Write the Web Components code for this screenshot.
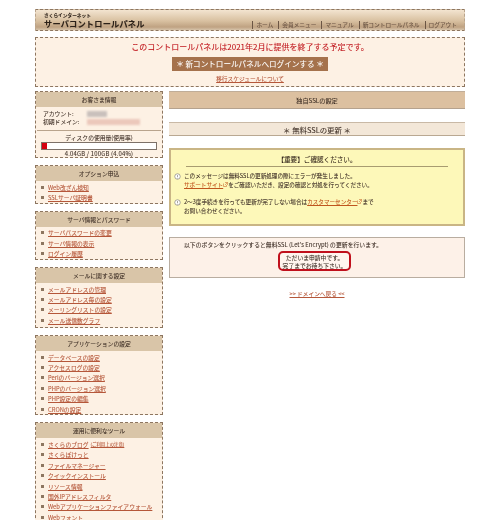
<!DOCTYPE html>
<html lang="ja">
<head>
<meta charset="utf-8">
<title>サーバコントロールパネル</title>
<style>
  html, body { height: 100%; }
  body {
    margin: 0;
    background: #fff;
    overflow: hidden;
    color: #3f3027;
    font-family: "Noto Sans CJK JP", "Liberation Sans", sans-serif;
  }
</style>
</head>
<body>
<cp-page>
  <cp-header slot="header"></cp-header>
  <cp-notice slot="notice"></cp-notice>

  <cp-sidebox slot="side" heading="お客さま情報">
    <cp-account></cp-account>
  </cp-sidebox>
  <cp-sidebox slot="side" heading="オプション申込">
    <cp-link>Web改ざん検知</cp-link>
    <cp-link>SSLサーバ証明書</cp-link>
  </cp-sidebox>
  <cp-sidebox slot="side" heading="サーバ情報とパスワード">
    <cp-link>サーバパスワードの変更</cp-link>
    <cp-link>サーバ情報の表示</cp-link>
    <cp-link>ログイン履歴</cp-link>
  </cp-sidebox>
  <cp-sidebox slot="side" heading="メールに関する設定" style="--extra:1.4px">
    <cp-link>メールアドレスの管理</cp-link>
    <cp-link>メールアドレス毎の設定</cp-link>
    <cp-link>メーリングリストの設定</cp-link>
    <cp-link>メール送信数グラフ</cp-link>
  </cp-sidebox>
  <cp-sidebox slot="side" heading="アプリケーションの設定">
    <cp-link>データベースの設定</cp-link>
    <cp-link>アクセスログの設定</cp-link>
    <cp-link>Perlのバージョン選択</cp-link>
    <cp-link>PHPのバージョン選択</cp-link>
    <cp-link>PHP設定の編集</cp-link>
    <cp-link>CRONの設定</cp-link>
  </cp-sidebox>
  <cp-sidebox slot="side" heading="運用に便利なツール">
    <cp-link note="(ご利用上の注意)">さくらのブログ</cp-link>
    <cp-link>さくらぽけっと</cp-link>
    <cp-link>ファイルマネージャー</cp-link>
    <cp-link>クイックインストール</cp-link>
    <cp-link>リソース情報</cp-link>
    <cp-link>国外IPアドレスフィルタ</cp-link>
    <cp-link>Webアプリケーションファイアウォール</cp-link>
    <cp-link>Webフォント</cp-link>
  </cp-sidebox>

  <cp-ssl slot="main"></cp-ssl>
</cp-page>

<script>
/**
 * Page frame: header, notice and the two columns.
 */
class CpPage extends HTMLElement {
  constructor () {
    super()
    this.attachShadow({ mode: 'open' })
    this.shadowRoot.innerHTML = `
<style>
  :host { display: block; width: 430px; margin: 0 auto; padding-top: 9px; filter: blur(.25px); -webkit-text-stroke: .08px; }
  .top { display: flex; flex-direction: column; gap: 6px; }
  .cols { display: grid; grid-template-columns: 128px 296px; gap: 6px; margin-top: 3px; }
  .side { display: flex; flex-direction: column; gap: 7px; padding-top: 1px; }
  .main { padding-top: 1px; }
</style>
<div class="top"><slot name="header"></slot><slot name="notice"></slot></div>
<div class="cols">
  <div class="side"><slot name="side"></slot></div>
  <div class="main"><slot name="main"></slot></div>
</div>`
  }
}

/**
 * Top bar with the logo text and the navigation.
 */
class CpHeader extends HTMLElement {
  constructor () {
    super()
    this.attachShadow({ mode: 'open' })
    this.shadowRoot.innerHTML = `
<style>
  :host {
    display: flex; justify-content: space-between; align-items: flex-end;
    height: 22px; padding: 0 7px 1px 8px; box-sizing: border-box;
    border-top: 1px dashed #8d7660; border-bottom: 1px dashed #8d7660;
    border-left: 1px dashed #b9a48d; border-right: 1px dashed #b9a48d;
    background: linear-gradient(#f3e4d0, #d8c0a0 55%, #bfa282 85%, #d6c3aa);
  }
  .logo { display: flex; flex-direction: column; color: #2c2118; font-weight: bold; padding-bottom: 1px; }
  .sub { font-size: 4.7px; line-height: 6px; }
  .name { font-size: 8.2px; line-height: 10px; letter-spacing: .2px; }
  nav { display: flex; font-size: 5.7px; line-height: 8px; color: #6b5544; }
  nav span { border-left: 1px solid #6b5544; padding: 0 5px 0 3px; white-space: nowrap; }
  nav span:last-child { padding-right: 0; }
</style>
<div class="logo"><span class="sub">さくらインターネット</span><span class="name">サーバコントロールパネル</span></div>
<nav><span>ホーム</span><span>会員メニュー</span><span>マニュアル</span><span>新コントロールパネル</span><span>ログアウト</span></nav>`
  }
}

/**
 * End of service notice with the button to the new panel.
 */
class CpNotice extends HTMLElement {
  constructor () {
    super()
    this.attachShadow({ mode: 'open' })
    this.shadowRoot.innerHTML = `
<style>
  :host {
    display: flex; flex-direction: column; align-items: center;
    height: 50px; box-sizing: border-box; padding-top: 3px;
    background: #fdf1e4; border: 1px dashed #8d7660;
  }
  .msg { font-size: 8px; line-height: 12px; color: #c0161c; white-space: nowrap; }
  .btn {
    margin-top: 4px; height: 14px; width: 156px; text-align: center; background: #a5724c;
    color: #fff; font-size: 7.6px; line-height: 14px; white-space: nowrap;
  }
  a { margin-top: 4px; font-size: 5.7px; line-height: 8px; color: #b5573a; text-decoration: underline; }
</style>
<div class="msg">このコントロールパネルは2021年2月に提供を終了する予定です。</div>
<div class="btn">＊ 新コントロールパネルへログインする ＊</div>
<a>移行スケジュールについて</a>`
  }
}

/**
 * Sidebar box: a tan heading above its slotted rows.
 */
class CpSidebox extends HTMLElement {
  constructor () {
    super()
    this.attachShadow({ mode: 'open' })
    this.shadowRoot.innerHTML = `
<style>
  :host {
    display: block; box-sizing: border-box; background: #fdf1e4;
    border: 1px dashed #8d7660; padding-bottom: var(--extra, 0);
  }
  h2 {
    margin: 0; height: 15px; background: #d9c5a8;
    font-size: 5.8px; font-weight: normal; line-height: 15px; text-align: center;
  }
  .rows { padding-top: 1px; }
</style>
<h2></h2>
<div class="rows"><slot></slot></div>`
    this.shadowRoot.querySelector('h2').textContent = this.getAttribute('heading')
  }
}

/**
 * One bulleted link in a sidebar box.
 */
class CpLink extends HTMLElement {
  constructor () {
    super()
    this.attachShadow({ mode: 'open' })
    this.shadowRoot.innerHTML = `
<style>
  :host {
    display: flex; align-items: center; height: 10.4px; padding-left: 5px;
    font-size: 5.8px; color: #b5573a; white-space: nowrap;
  }
  i { width: 3px; height: 3px; background: #8d7660; margin-right: 4px; flex: none; }
  a { text-decoration: underline; }
  small { font-size: 4.4px; margin-left: 2px; text-decoration: underline; }
</style>
<i></i><a><slot></slot></a><small></small>`
    this.shadowRoot.querySelector('small').textContent = this.getAttribute('note') || ''
  }
}

/**
 * Account info and the disk usage meter.
 */
class CpAccount extends HTMLElement {
  constructor () {
    super()
    this.attachShadow({ mode: 'open' })
    this.shadowRoot.innerHTML = `
<style>
  :host { display: block; font-size: 5.8px; height: 50px; margin-top: -1px; }
  .info {
    display: grid; grid-template-columns: 44px 1fr; line-height: 8px;
    padding: 3px 0 4px 6px; margin: 0 1px; border-bottom: 1px solid #b9a48d;
  }
  .blur { align-self: center; height: 6px; background: #e8cfc8; filter: blur(1.2px); }
  .a { width: 20px; background: #c9c0bc; }
  .d { width: 53px; background: #ecc8bb; }
  .head { text-align: center; line-height: 8px; margin-top: 3px; }
  .bar { height: 8px; margin: 0 5px; border: 1px solid #7d7168; background: #fff; box-sizing: border-box; }
  .bar div { width: 5px; height: 100%; background: #d4000f; }
  .val { text-align: center; line-height: 8px; font-size: 5.9px; letter-spacing: .2px; }
</style>
<div class="info">
  <span>アカウント:</span><span class="blur a"></span>
  <span>初期ドメイン:</span><span class="blur d"></span>
</div>
<div class="head">ディスクの使用量(使用率)</div>
<div class="bar"><div></div></div>
<div class="val">4.04GB / 100GB (4.04%)</div>`
  }
}

/**
 * Main column: the free SSL update screen.
 */
class CpSsl extends HTMLElement {
  constructor () {
    super()
    this.attachShadow({ mode: 'open' })
    this.shadowRoot.innerHTML = `
<style>
  :host { display: block; font-size: 5.6px; }
  .title {
    height: 18px; line-height: 17px; text-align: center; background: #dcc0a0; font-size: 6.2px;
    border-top: 1px solid #c0ad98; border-bottom: 1px solid #b5a28e; box-sizing: border-box;
  }
  .sub {
    height: 14px; line-height: 13px; margin-top: 13px; text-align: center;
    background: #f3e7d8; border-top: 1px solid #c9b9a6; border-bottom: 1px solid #b9a892;
    box-sizing: border-box; font-size: 7.4px;
  }
  .warn {
    height: 78px; margin-top: 12px; box-sizing: border-box; background: #fdf8b9;
    border: 2px solid #c9b585; padding: 4px 3px 0;
  }
  .warn h3 {
    margin: 0 12px; font-weight: normal; font-size: 6.6px; line-height: 11px; height: 12px;
    text-align: center; color: #3a2c20; border-bottom: 1px solid #a89c70;
  }
  .warn p { margin: 0; display: grid; grid-template-columns: 8px 1fr; column-gap: 2px; line-height: 9px; }
  .warn p:first-of-type { margin-top: 5px; }
  .warn p + p { margin-top: 8px; }
  .warn svg { width: 7px; height: 7px; margin-top: 1px; }
  a { color: #c0561e; text-decoration: underline; }
  .warn svg.ext { display: inline-block; width: 5px; height: 5px; margin: 0; vertical-align: baseline; }
  .req {
    height: 41px; margin-top: 11px; box-sizing: border-box; background: #fdf1e8;
    border: 1px solid #b9ada0; display: flex; flex-direction: column; align-items: center;
  }
  .req div { align-self: flex-start; line-height: 9px; margin: 2px 0 0 14px; white-space: nowrap; font-size: 5.8px; letter-spacing: .05px; }
  .wait {
    margin: 2px 5px 0 0; width: 73px; height: 20px; box-sizing: border-box;
    border: 2px solid #c0101c; border-radius: 5px; background: #fff5ee;
    text-align: center; line-height: 7.5px; font-size: 5.8px; white-space: nowrap; padding-top: 1px;
  }
  .back { text-align: center; margin-top: 11px; line-height: 9px; font-size: 5.7px; }
  .back a { color: #b5573a; }
</style>
<div class="title">独自SSLの設定</div>
<div class="sub">＊ 無料SSLの更新 ＊</div>
<div class="warn">
  <h3>【重要】ご確認ください。</h3>
  <p><svg viewBox="0 0 14 14"><circle cx="7" cy="7" r="5.5" fill="#fff" stroke="#8d8a80" stroke-width="1.5"/><path d="M7 4v4M7 9.5v1.5" stroke="#8d8a80" stroke-width="1.5"/></svg>
    <span>このメッセージは無料SSLの更新処理の際にエラーが発生しました。<br><a>サポートサイト</a><svg class="ext" viewBox="0 0 10 10"><path d="M1 3v6h6V6M4 1h5v5M9 1 4 6" fill="none" stroke="#c0561e"/></svg>をご確認いただき、設定の確認と対処を行ってください。</span></p>
  <p><svg viewBox="0 0 14 14"><circle cx="7" cy="7" r="5.5" fill="#fff" stroke="#8d8a80" stroke-width="1.5"/><path d="M7 4v4M7 9.5v1.5" stroke="#8d8a80" stroke-width="1.5"/></svg>
    <span>2～3度手続きを行っても更新が完了しない場合は<a>カスタマーセンター</a><svg class="ext" viewBox="0 0 10 10"><path d="M1 3v6h6V6M4 1h5v5M9 1 4 6" fill="none" stroke="#c0561e"/></svg>まで<br>お問い合わせください。</span></p>
</div>
<div class="req">
  <div>以下のボタンをクリックすると無料SSL (Let's Encrypt) の更新を行います。</div>
  <section class="wait">ただいま申請中です。<br>完了までお待ち下さい。</section>
</div>
<div class="back"><a>&gt;&gt; ドメインへ戻る &lt;&lt;</a></div>`
  }
}

customElements.define('cp-page', CpPage)
customElements.define('cp-header', CpHeader)
customElements.define('cp-notice', CpNotice)
customElements.define('cp-sidebox', CpSidebox)
customElements.define('cp-link', CpLink)
customElements.define('cp-account', CpAccount)
customElements.define('cp-ssl', CpSsl)
</script>
</body>
</html>
